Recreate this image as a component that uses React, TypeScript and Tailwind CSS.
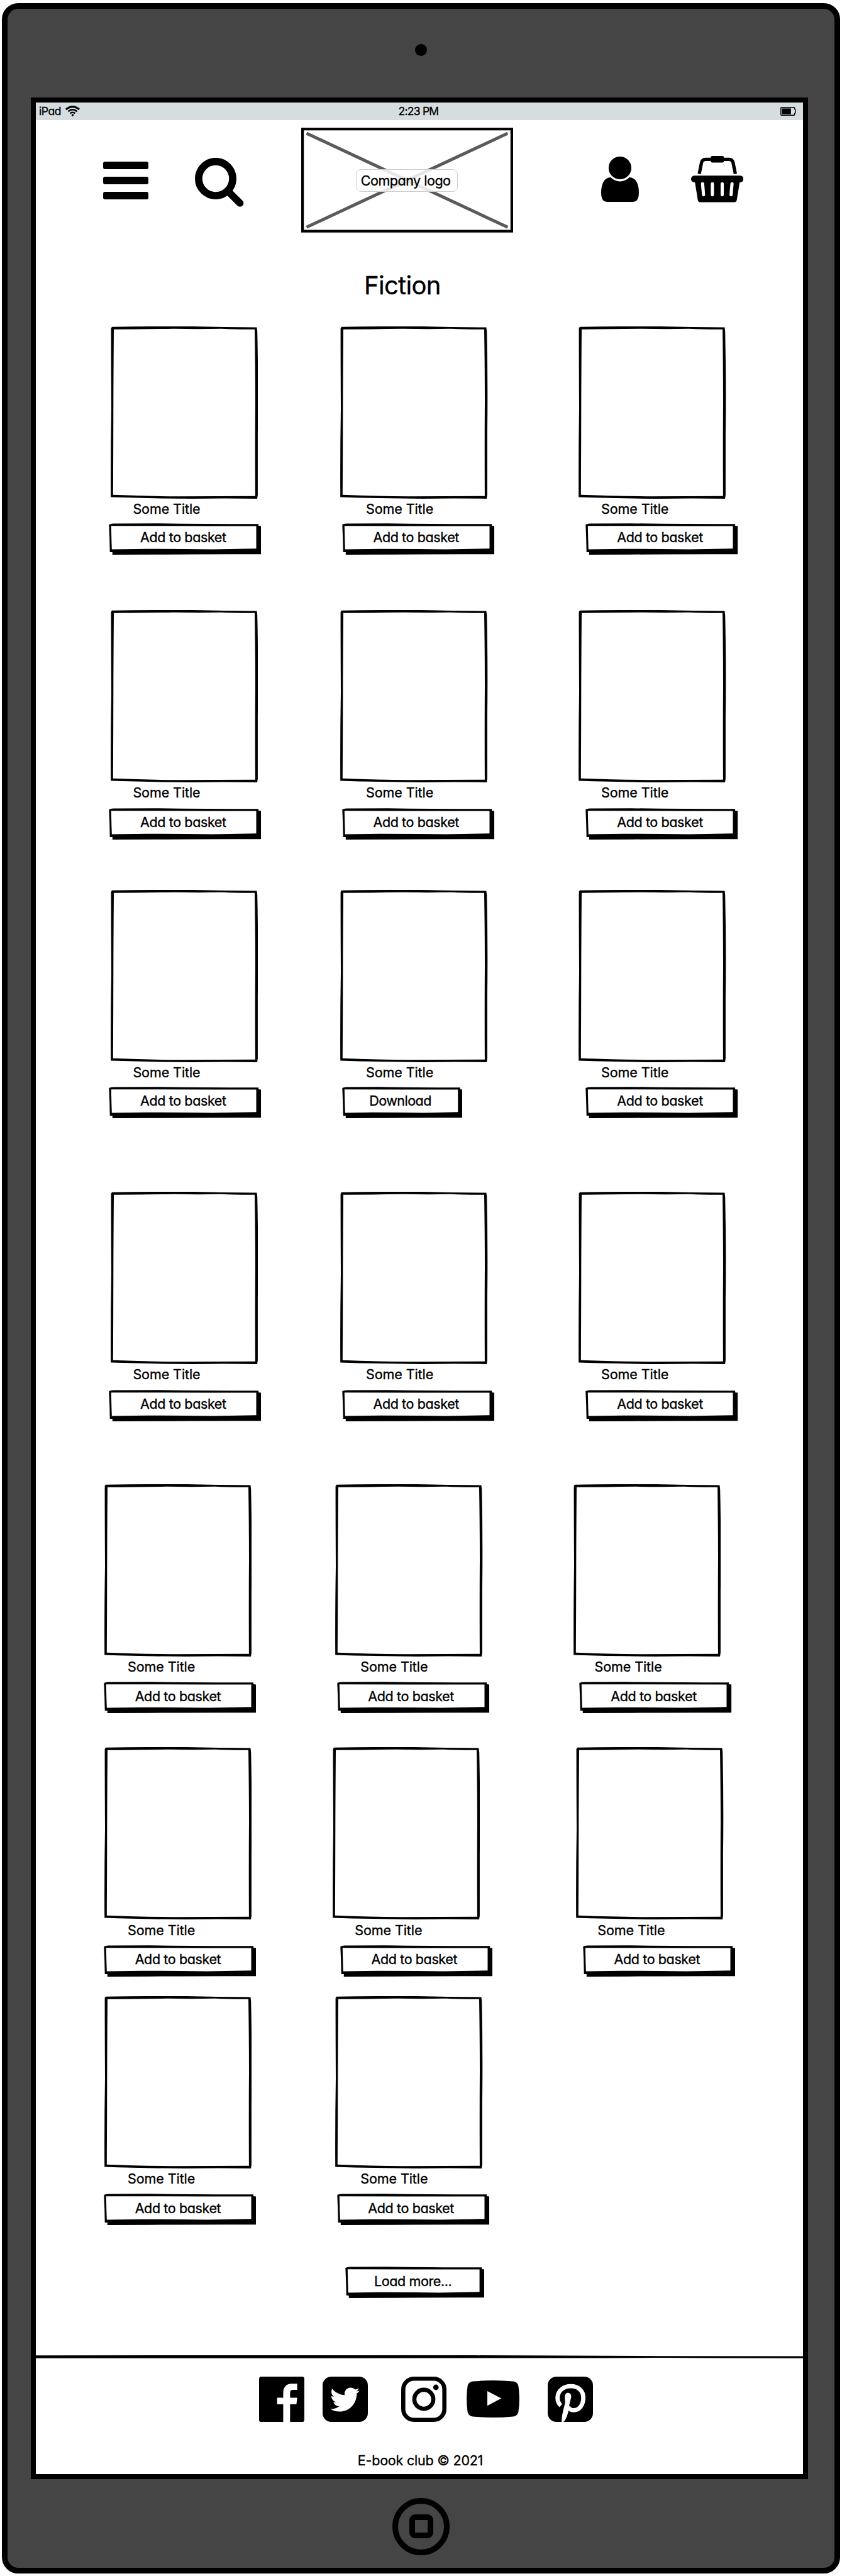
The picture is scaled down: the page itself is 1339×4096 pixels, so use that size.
import React from "react";
import { FaTwitter } from "react-icons/fa";

/* Hand-drawn frame used for every book cover. */
function CoverFrame() {
  return (
    <svg className="block h-[274px] w-[234.5px]" viewBox="0 0 234.5 274" aria-hidden="true">
      <path
        fillRule="evenodd"
        d="M2 0.8 Q70 -0.4 130 0 Q180 1.4 232.4 1.6 L233.2 8 Q235 90 233.9 170 L233.9 268 L233 274 Q180 273 130 274 Q60 273.6 0.2 271.6 Q-0.2 200 1 130 Q0.6 60 0.6 3 Z M5 4.7 Q4.4 80 4.3 130 Q4.2 200 3.8 267.8 Q60 270 110 270.2 L229.9 269.8 Q229.5 180 230 120 Q229.9 60 229 4.8 Q200 5 176 3.8 Q140 4.6 100 3.8 Q50 4.6 5 4.7 Z"
      />
    </svg>
  );
}

function SketchButton({ label, w, tracking }: { label: string; w: number; tracking: string }) {
  const r = w - 4;
  const d = `M0.3 2 Q3 0.2 8 0.4 L${w * 0.3} 0.2 Q${w * 0.6} 1.2 ${r} 1.3 L${r} 4 L${w} 4.6 L${w} 49.2 Q${w * 0.5} 49 ${w * 0.3} 49.8 L5.8 50 L5.8 45.9 L1.7 45.9 Q1.4 24 0.3 2 Z M3.8 4.2 Q4.2 24 4.8 41.6 L${w * 0.25} 40.8 L${w * 0.5} 40.9 L${w * 0.68} 41.5 L${w - 7.6} 40.2 L${w - 7.6} 4.6 Q${w * 0.5} 4.4 3.8 4.2 Z`;
  return (
    <button className="relative flex h-[50px] shrink-0 justify-center pr-1.5 pt-[10.4px]" style={{ width: w }}>
      <svg className="absolute left-0 top-0 h-full w-full" viewBox={`0 0 ${w} 50`} aria-hidden="true">
        <path fillRule="evenodd" d={d} />
      </svg>
      <span className={`relative whitespace-nowrap text-[21.5px] leading-6 ${tracking}`}>{label}</span>
    </button>
  );
}

type Book = { cell: string; title: string; button: string; download?: boolean };

const shelf: Book[] = [
  { cell: "", title: "ml-[35.5px]", button: "ml-[-2.6px]" },
  { cell: "ml-[130.8px]", title: "ml-[40.8px]", button: "ml-[2.5px]" },
  { cell: "ml-[144.5px]", title: "ml-[35.9px]", button: "ml-[11.3px]" },
];
const shelfWithDownload: Book[] = [shelf[0], { ...shelf[1], download: true }, shelf[2]];
const lowerShelf: Book[] = [
  { cell: "", title: "ml-[37.5px]", button: "ml-[-0.6px]" },
  { cell: "ml-[133px]", title: "ml-[40.2px]", button: "ml-[2.6px]" },
  { cell: "ml-[144.2px]", title: "ml-[33.8px]", button: "ml-[9.8px]" },
];
const wideShelf: Book[] = [
  lowerShelf[0],
  { cell: "ml-[128.9px]", title: "ml-[35.3px]", button: "ml-[11.9px]" },
  { cell: "ml-[153.1px]", title: "ml-[33.8px]", button: "ml-[10.3px]" },
];

const TIGHT = "mt-[10.9px]";
const LOOSE = "mt-[12.4px]";

const rows: { cls: string; gap: string; books: Book[] }[] = [
  { cls: "h-[451.4px] pl-[118.9px]", gap: TIGHT, books: shelf },
  { cls: "h-[444.6px] pl-[118.9px]", gap: LOOSE, books: shelf },
  { cls: "h-[480.3px] pl-[118.9px]", gap: TIGHT, books: shelfWithDownload },
  { cls: "h-[464.7px] pl-[118.9px]", gap: LOOSE, books: shelf },
  { cls: "h-[418.6px] pl-[108.5px]", gap: LOOSE, books: lowerShelf },
  { cls: "h-[395.4px] pl-[108.5px]", gap: LOOSE, books: wideShelf },
  { cls: "h-[430.8px] pl-[108.5px]", gap: LOOSE, books: lowerShelf.slice(0, 2) },
];

function BookCard({ book, gap }: { book: Book; gap: string }) {
  return (
    <article className={`flex w-[234.5px] shrink-0 flex-col items-start ${book.cell}`}>
      <CoverFrame />
      <h2 className={`mt-[4.4px] whitespace-nowrap text-[21.5px] leading-6 tracking-[-0.08px] ${book.title}`}>Some Title</h2>
      <div className={`${gap} ${book.button}`}>
        {book.download ? (
          <SketchButton label="Download" w={191.8} tracking="tracking-[-0.5px]" />
        ) : (
          <SketchButton label="Add to basket" w={242.1} tracking="tracking-[-0.38px]" />
        )}
      </div>
    </article>
  );
}

function StatusBar() {
  return (
    <div className="flex h-7 items-center bg-[#d6dde0] text-[17.5px] leading-6">
      <div className="flex flex-1 items-center gap-[7px] pl-[5px]">
        <span className="tracking-[-0.4px]">iPad</span>
        <svg className="h-[17px] w-[23px]" viewBox="0 0 23 17" fill="none" stroke="#000" strokeWidth="3">
          <path d="M1 6 Q11.5 -2.8 22 6" />
          <path d="M4.4 9.3 Q11.5 3.2 18.6 9.3" strokeWidth="2.5" />
          <path d="M7.5 12.4 Q11.5 9 15.5 12.4" strokeWidth="2.5" />
          <circle cx="11.5" cy="15" r="1.8" fill="#000" stroke="none" />
        </svg>
      </div>
      <span className="pl-[3px] tracking-[-0.75px]">2:23 PM</span>
      <div className="flex flex-1 justify-end pr-[11px]">
        <svg className="h-[14px] w-[25px]" viewBox="0 0 25 14">
          <path d="M1.7 0.8 H21.6 Q22.6 0.8 22.6 2 V3.6 Q24.2 4 24.2 5 V9 Q24.2 10 22.6 10.4 V12 Q22.6 13.2 21.6 13.2 H1.7 Q0.8 13.2 0.8 12.2 V1.8 Q0.8 0.8 1.7 0.8 Z" fill="none" stroke="#000" strokeWidth="1.4" />
          <rect x="2.5" y="2.4" width="14.3" height="9.2" />
        </svg>
      </div>
    </div>
  );
}

function Header() {
  return (
    <header className="flex h-[239.4px] items-start">
      <div className="ml-[106.5px] mt-[66.4px] flex w-[72px] flex-col gap-[11.8px]">
        <div className="h-3 rounded-[3px] bg-black" />
        <div className="h-3 rounded-[3px] bg-black" />
        <div className="h-3 rounded-[3px] bg-black" />
      </div>
      <svg className="ml-[74.9px] mt-[60.5px] h-[78px] w-[78px]" viewBox="0 0 78 78" fill="none" stroke="#000">
        <circle cx="33" cy="33" r="27.1" strokeWidth="11.8" />
        <path d="M54 54.5 L71.6 72" strokeWidth="11.6" strokeLinecap="round" />
      </svg>
      <div className="relative ml-[90.3px] mt-[12.4px] flex h-[167px] w-[337px] items-center justify-center">
        <svg className="absolute left-0 top-0 h-full w-full" viewBox="0 0 337 167" aria-hidden="true">
          <path d="M8.5 9 L328.3 158.3 M8.5 158.3 L328.3 9" stroke="#5a5a5a" strokeWidth="5" />
          <rect x="2.1" y="2.2" width="332.8" height="162.4" fill="none" stroke="#000" strokeWidth="4.2" />
        </svg>
        <span className="relative flex h-9 w-[162px] items-center justify-center rounded-lg border-[1.5px] border-[#cfcfcf] bg-white/85 pr-1 text-[21.5px] leading-6 tracking-[-0.48px]">
          Company logo
        </span>
      </div>
      <svg className="ml-[139.9px] mt-[58.4px] h-[72px] w-[60px]" viewBox="0 0 60 72">
        <circle cx="29.9" cy="18" r="18.1" />
        <path d="M15 33 C5 33.5 0 43 0 57 C0 67 3 72 10 72 H50 C57 72 60 67 60 57 C60 43 55 33.5 45 33 C36.5 41.5 23.5 41.5 15 33 Z" />
      </svg>
      <svg className="ml-[83.4px] mt-[57.2px] h-[73.4px] w-[83.4px]" viewBox="0 0 83.4 73.4">
        <path d="M13 28.6 L16.6 10.5 Q18 5.3 23.5 5.3 H60 Q65.4 5.3 66.8 10.5 L70.4 28.6" fill="none" stroke="#000" strokeWidth="5.3" />
        <rect x="31.3" y="0" width="20.9" height="10.6" rx="2.4" />
        <rect x="0" y="31.3" width="83.4" height="10.6" rx="5.2" />
        <path d="M6 41 H77.4 L72.8 69.5 Q72.2 73.4 68.6 73.4 H14.8 Q11.2 73.4 10.6 69.5 Z" />
        <path d="M18.3 44.3 L19.8 61.6 M33.9 44.3 V61.6 M49.5 44.3 V61.6 M65.1 44.3 L63.6 61.6" stroke="#fff" strokeWidth="5.1" strokeLinecap="round" />
      </svg>
    </header>
  );
}

function Footer() {
  return (
    <footer className="flex flex-col">
      <svg className="block h-[5px] w-full" viewBox="0 0 1220 5" preserveAspectRatio="none" aria-hidden="true">
        <path d="M0 0.3 L300 0 L700 0.1 L990 1.2 L1220 1.5 L1220 4.8 L1080 4.6 L990 4 L900 4.6 L0 4.7 Z" />
      </svg>
      <div className="mt-[29px] flex items-center pl-[355px]">
        <svg className="h-[72px] w-[72px]" viewBox="0 0 72 72">
          <rect width="72" height="72" rx="3.6" />
          <path fill="#fff" d="M49.3 72 V44 H59.4 L60.6 33.5 H49.3 V27 C49.3 22.5 50.6 21 54 21 H60.6 V11.2 H52 C43 11.2 38.4 17 38.4 26 V33.5 H28.6 V44 H38.4 V72 Z" />
        </svg>
        <div className="ml-[28.9px] flex h-[72px] w-[72px] items-center justify-center rounded-[14px] bg-black pt-[2px]">
          <FaTwitter className="h-[47px] w-[47px] text-white" />
        </div>
        <svg className="ml-[53.5px] h-[72px] w-[72px]" viewBox="0 0 72 72" fill="none" stroke="#000" strokeWidth="6.6">
          <rect x="3.3" y="3.3" width="65.4" height="65.4" rx="17" />
          <circle cx="36" cy="36" r="15.1" />
          <circle cx="55.2" cy="17" r="4.4" fill="#000" stroke="none" />
        </svg>
        <svg className="ml-[32.1px] h-[59px] w-[84px]" viewBox="0 0 84 59">
          <path d="M10 1.6 Q42 -1.4 74 1.6 Q81 2.2 82.4 9 Q85.4 29.5 82.4 50 Q81 56.8 74 57.4 Q42 60.4 10 57.4 Q3 56.8 1.6 50 Q-1.4 29.5 1.6 9 Q3 2.2 10 1.6 Z" />
          <path fill="#fff" d="M33 17 L55.2 28.6 L33 40.3 Z" />
        </svg>
        <svg className="ml-[44.5px] h-[72px] w-[72px]" viewBox="0 0 72 72">
          <rect width="72" height="72" rx="14" />
          <path d="M21 46 C17.5 43 15.7 38.5 15.7 34 C15.7 22.5 25 15.2 36.8 15.2 C48.5 15.2 56.6 22.5 56.6 33.5 C56.6 45 50.5 53.4 41.5 53.4 C37 53.4 34 51.4 32.5 48" fill="none" stroke="#fff" strokeWidth="6.8" />
          <path fill="#fff" d="M27.3 32 C27.3 27.8 29.5 25.8 32.3 25.8 C35.8 25.8 37.8 28.8 37.2 32.5 C36.6 37 34.6 42 34.2 46.5 C33.5 54 31 65 26.6 70.4 L25 72 H22.3 C21.7 62 26.5 48 27.8 40.5 C27.2 37.5 27.2 35 27.3 32 Z" />
        </svg>
      </div>
      <p className="mt-[49.2px] pl-[3px] text-center text-[21.5px] leading-6 tracking-[-0.22px]">E-book club © 2021</p>
    </footer>
  );
}

export default function App() {
  return (
    <div className="h-[4096px] w-[1339px] overflow-hidden bg-white pl-[3px] pt-[5px] text-black [font-family:Inter,'Liberation_Sans',sans-serif] [font-feature-settings:'cv11'] [-webkit-text-stroke:0.35px_#000]">
      <div className="flex h-[4087px] w-[1333px] flex-col items-center rounded-[26px] border-[9px] border-black bg-[#454545]">
        <div className="mt-[56.3px] h-[19px] w-[19px] shrink-0 rounded-full bg-black" />
        <div className="mt-[65.7px] ml-[-5px] h-[3787px] w-[1236px] shrink-0 border-8 border-black bg-white">
          <StatusBar />
          <Header />
          <h1 className="pl-[522px] text-[40px] leading-[48px] tracking-[-0.7px]">Fiction</h1>
          <main className="mt-[40.3px] flex flex-col">
            {rows.map((row, i) => (
              <section key={i} className={`flex items-start ${row.cls}`}>
                {row.books.map((book, j) => (
                  <BookCard key={j} book={book} gap={row.gap} />
                ))}
              </section>
            ))}
            <div className="h-[140.5px] pl-[492.1px]">
              <SketchButton label="Load more..." w={221.2} tracking="tracking-[-0.4px]" />
            </div>
          </main>
          <Footer />
        </div>
        <div className="mt-[30px] flex h-[91px] w-[91px] shrink-0 items-center justify-center rounded-full border-[9px] border-black">
          <div className="h-[38px] w-[38px] rounded-[9px] border-[9px] border-black" />
        </div>
      </div>
    </div>
  );
}
